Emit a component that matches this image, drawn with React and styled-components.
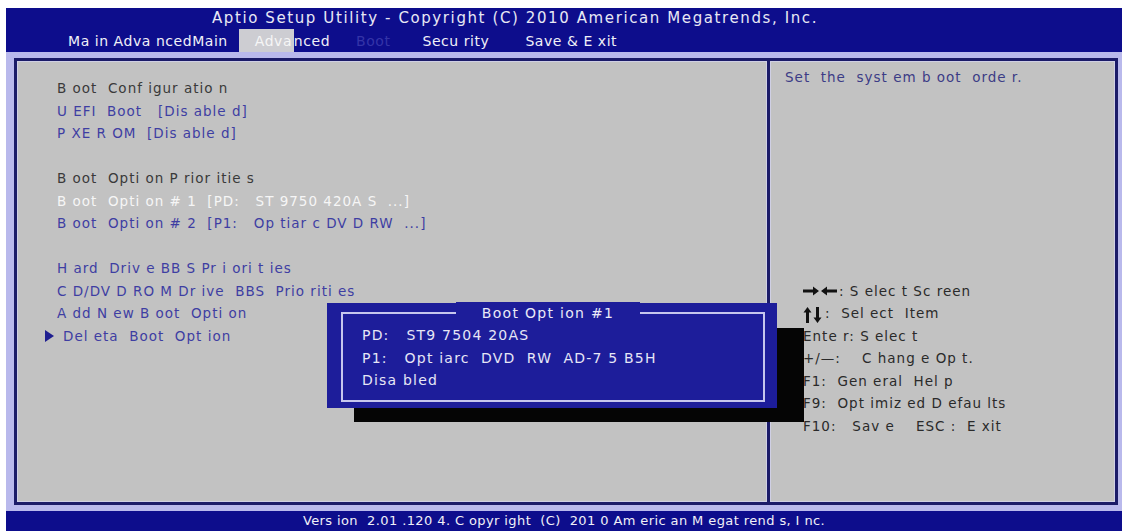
import React from "react";
import styled, { createGlobalStyle } from "styled-components";

const Global = createGlobalStyle`
  html, body { margin: 0; padding: 0; background: #ffffff; }
  body { font-family: "DejaVu Sans", "Liberation Sans", sans-serif; }
  * { box-sizing: border-box; }
`;

const Screen = styled.div`
  margin: 8px 1px 0 6px;
  width: 1116px;
  height: 523px;
  display: flex;
  flex-direction: column;
  font-family: "DejaVu Sans", "Liberation Sans", sans-serif;
`;

const Header = styled.div`
  height: 44px;
  background: #0d0d8c;
  display: flex;
  flex-direction: column;
`;

const Title = styled.div`
  height: 21px;
  line-height: 21px;
  text-align: center;
  color: #e8e8f4;
  font-size: 15px;
  letter-spacing: 1.6px;
  padding-right: 98px;
`;

const Tabs = styled.div`
  height: 23px;
  display: flex;
  align-items: stretch;
  padding-left: 62px;
  font-size: 14px;
  letter-spacing: 0.55px;
`;

const Tab = styled.div`
  display: flex;
  align-items: center;
  color: ${(p) => (p.$dim ? "#3434a8" : "#f0f0f8")};
  margin-right: ${(p) => p.$gap || 0}px;
`;

const ActiveBox = styled.span`
  display: flex;
  align-items: center;
  align-self: stretch;
  background: #cdcdd2;
  color: #f6f6f6;
  padding-left: 16px;
  width: 55px;
  margin-left: 11px;
  overflow: hidden;
`;

const Body = styled.div`
  flex: 1;
  background: #b9b9ec;
  padding: 6px 4px 6px 8px;
  display: flex;
`;

const Frame = styled.div`
  flex: 1;
  position: relative;
  border: 3px solid #1b1b68;
  display: flex;
`;

const Pane = styled.div`
  background: #c2c2c2;
  box-shadow: inset 0 0 0 1px #cfcfe4;
  display: flex;
  flex-direction: column;
`;

const LeftPane = styled(Pane)`
  width: 750px;
  padding: 16px 0 0 40px;
`;

const Divider = styled.div`
  width: 3px;
  background: #1b1b68;
`;

const RightPane = styled(Pane)`
  flex: 1;
  padding: 5px 0 0 15px;
`;

const colors = {
  head: "#3a3a3a",
  item: "#3e3ea2",
  sel: "#f6f6f6",
  help: "#2a2a2a",
  desc: "#3c3c86",
};

const Line = styled.div`
  height: 22.5px;
  line-height: 22.5px;
  font-size: 13.5px;
  letter-spacing: 1px;
  white-space: pre;
  color: ${(p) => colors[p.$kind] || colors.item};
  display: flex;
  align-items: center;
`;

const Pointer = styled.span`
  width: 0;
  height: 0;
  border-top: 6.5px solid transparent;
  border-bottom: 6.5px solid transparent;
  border-left: 9px solid #1e1e90;
  margin-left: -12px;
  margin-right: 9px;
`;

const Help = styled.div`
  margin-top: 191px;
  margin-left: 18px;
  display: flex;
  flex-direction: column;
`;

const Popup = styled.div`
  position: absolute;
  left: 310px;
  top: 242px;
  width: 450px;
  height: 105px;
  background: #1d1d9a;
  z-index: 2;
  padding: 9px 12px 6px 14px;
  display: flex;
`;

const PopupShadow = styled.div`
  position: absolute;
  left: 337px;
  top: 267px;
  width: 450px;
  height: 94px;
  background: #050505;
  z-index: 1;
`;

const PopupInner = styled.div`
  flex: 1;
  position: relative;
  border: 2px solid #c6c6ee;
  padding: 10px 0 0 19px;
  display: flex;
  flex-direction: column;
`;

const PopupTitle = styled.div`
  position: absolute;
  top: -12px;
  left: 0;
  right: 0;
  display: flex;
  justify-content: center;
`;

const PopupTitleText = styled.span`
  background: #1d1d9a;
  color: #eaeaf8;
  font-size: 14px;
  letter-spacing: 1.3px;
  line-height: 22px;
  padding: 0 26px;
  margin-left: -10px;
`;

const PopupLine = styled.div`
  height: 22.5px;
  line-height: 22.5px;
  font-size: 14px;
  letter-spacing: 1.2px;
  white-space: pre;
  color: #e6e6f6;
`;

const Footer = styled.div`
  height: 20px;
  background: #0d0d8c;
  color: #f0f0f8;
  font-size: 13px;
  letter-spacing: 0.4px;
  line-height: 20px;
  text-align: center;
  white-space: pre;
`;

const Glyph = styled.svg`
  display: block;
  margin-right: 2px;
`;

const LeftRightArrows = () => (
  <Glyph width="34" height="10" viewBox="0 0 34 10">
    <path d="M0 3.5h10V0.5l6 4.5-6 4.5V6.5H0z" fill="#111" />
    <path d="M34 3.5H24V0.5l-6 4.5 6 4.5V6.5h10z" fill="#111" />
  </Glyph>
);

const UpDownArrows = () => (
  <Glyph width="20" height="16" viewBox="0 0 20 16" style={{ marginTop: 4 }}>
    <path d="M4.5 0l4 5.5h-2.5V16h-3V5.5H0.5z" fill="#111" />
    <path d="M14.5 16l4-5.5h-2.5V0h-3v10.5h-2.5z" fill="#111" />
  </Glyph>
);

const leftItems = [
  { k: "head", t: "B oot  Conf igur atio n" },
  { k: "item", t: "U EFI  Boot   [Dis able d]" },
  { k: "item", t: "P XE R OM  [Dis able d]" },
  { k: "blank", t: "" },
  { k: "head", t: "B oot  Opti on P rior itie s" },
  { k: "sel", t: "B oot  Opti on # 1  [PD:   ST 9750 420A S  ...]" },
  { k: "item", t: "B oot  Opti on # 2  [P1:   Op tiar c DV D RW  ...]" },
  { k: "blank", t: "" },
  { k: "item", t: "H ard  Driv e BB S Pr i ori t ies" },
  { k: "item", t: "C D/DV D RO M Dr ive  BBS  Prio riti es" },
  { k: "item", t: "A dd N ew B oot  Opti on" },
  { k: "item", t: "Del eta  Boot  Opt ion", ptr: true },
];

export default function App() {
  return (
    <>
      <Global />
      <Screen>
        <Header>
          <Title>Aptio Setup Utility - Copyright (C) 2010 American Megatrends, Inc.</Title>
          <Tabs>
            <Tab>Ma in Adva ncedMain</Tab>
            <ActiveBox>Adva</ActiveBox>
            <Tab $gap={26}>nced</Tab>
            <Tab $dim $gap={32}>Boot</Tab>
            <Tab $gap={36}>Secu rity</Tab>
            <Tab>Save  &amp; E xit</Tab>
          </Tabs>
        </Header>
        <Body>
          <Frame>
            <LeftPane>
              {leftItems.map((it, i) => (
                <Line key={i} $kind={it.k}>
                  {it.ptr && <Pointer />}
                  {it.t}
                </Line>
              ))}
            </LeftPane>
            <Divider />
            <RightPane>
              <Line $kind="desc">Set  the  syst em b oot  orde r.</Line>
              <Help>
                <Line $kind="help">
                  <LeftRightArrows />: S elec t Sc reen
                </Line>
                <Line $kind="help">
                  <UpDownArrows />:  Sel ect  Item
                </Line>
                <Line $kind="help">Ente r: S elec t</Line>
                <Line $kind="help">+/—:    C hang e Op t.</Line>
                <Line $kind="help">F1:  Gen eral  Hel p</Line>
                <Line $kind="help">F9:  Opt imiz ed D efau lts</Line>
                <Line $kind="help">F10:   Sav e    ESC :  E xit</Line>
              </Help>
            </RightPane>
            <PopupShadow />
            <Popup>
              <PopupInner>
                <PopupTitle>
                  <PopupTitleText>Boot  Opt ion  #1</PopupTitleText>
                </PopupTitle>
                <PopupLine>PD:   ST9 7504 20AS</PopupLine>
                <PopupLine>P1:   Opt iarc  DVD  RW  AD-7 5 B5H</PopupLine>
                <PopupLine>Disa bled</PopupLine>
              </PopupInner>
            </Popup>
          </Frame>
        </Body>
        <Footer>Vers ion  2.01 .120 4. C opyr ight  (C)  201 0 Am eric an M egat rend s, I nc.</Footer>
      </Screen>
    </>
  );
}
